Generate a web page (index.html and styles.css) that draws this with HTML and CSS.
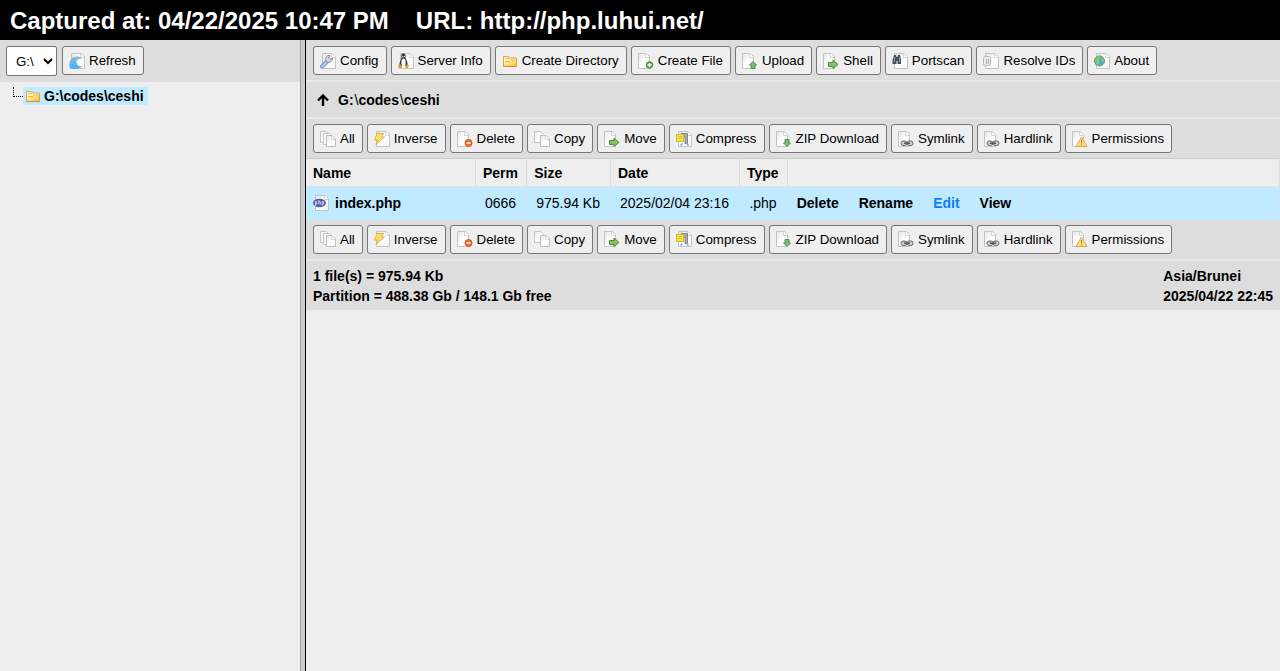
FILE: index.html
```html
<!DOCTYPE html>
<html lang="en">
<head>
<meta charset="utf-8">
<title>File Manager</title>
<link rel="stylesheet" href="styles.css">
</head>
<body>
<svg class="defs" aria-hidden="true">
  <defs>
    <linearGradient id="paper" x1="0" y1="0" x2="1" y2="1"><stop offset="0" stop-color="#e4e4e4"/><stop offset=".5" stop-color="#fff"/><stop offset="1" stop-color="#f4f4f4"/></linearGradient>
    <linearGradient id="gold" x1="0" y1="0" x2="1" y2="1"><stop offset="0" stop-color="#fff8cc"/><stop offset="1" stop-color="#f2c335"/></linearGradient>
    <linearGradient id="wave" x1="0" y1="0" x2="0" y2="1"><stop offset="0" stop-color="#8fbdd6"/><stop offset="1" stop-color="#3fb0ff"/></linearGradient>
  </defs>
  <symbol id="page" viewBox="0 0 16 16"><path d="M2.500.500h8l3 3v12h-11z" fill="url(#paper)" stroke="#c4c4c4"/><path d="M9.500.8v3.700h3.700" fill="#fff" stroke="#d4d4d4"/></symbol>
  <symbol id="pager" viewBox="0 0 16 16"><path d="M2.500.500h9.500l3.500 3.500v11.500h-13z" fill="url(#paper)" stroke="#c4c4c4"/><path d="M11.500 1v3.500h3.500" fill="#fff" stroke="#d8d8d8"/></symbol>
  <symbol id="refresh" viewBox="0 0 16 16"><use href="#pager"/><path d="M1 15.500C-1 9 2 3.500 8 3.500c3 0 4.500 1 5 2.500-3-1-6 1-5.500 4 .5 2.500 3 4 6 3-2 3-8 3.500-12.500 2.500z" fill="url(#wave)"/></symbol>
  <symbol id="folder" viewBox="0 0 16 16"><path d="M1.500 13.500v-10h5l1 1.500h7v8.500z" fill="#fff3bb" stroke="#dfa04c"/><path d="M2 13l1-4h5l1-2h5v6z" fill="url(#gold)"/><path d="M3 5.500h4m1 1.500h5.500M3 8.500h5" stroke="#eab84a" fill="none"/><path d="M1.500 13.500h13" stroke="#db8b42"/></symbol>
  <symbol id="config" viewBox="0 0 16 16"><use href="#pager"/><path d="M2 13.500l5-5" stroke="#668ed0" stroke-width="4" stroke-linecap="round"/><path d="M2.200 13.300l5-5" stroke="#a9c8fa" stroke-width="2.400" stroke-linecap="round"/><path d="M6.500 8.500c-2-3 0-6.500 3.500-6L8.500 5 10 6.500 12.500 5c0 4-3 5-6 3.500z" fill="#ddd" stroke="#888"/></symbol>
  <symbol id="server" viewBox="0 0 16 16"><use href="#pager"/><path d="M5.500.500C3.500.500 3 2 3.500 4.500 3 7 1 9 1.500 13h8c.5-4-1.500-6-2-8 .3-3 0-4.500-2-4.500z" fill="#333"/><ellipse cx="5.500" cy="9.800" rx="2.200" ry="4" fill="#fff"/><circle cx="4.800" cy="3.300" r=".6" fill="#fff"/><circle cx="6.400" cy="3.300" r=".6" fill="#fff"/><path d="M4 4.500h3l-1.500 1.200zM0 12.500l2-1.500 2.500 3.500-3.500 1zM11 12.500L9 11l-2 3.500 2.500 1z" fill="#d69d24"/></symbol>
  <symbol id="newfile" viewBox="0 0 16 16"><use href="#page" x="-2"/><circle cx="11.500" cy="12" r="3.300" fill="#5da33d" stroke="#4c8f32"/><path d="M9.500 12h4m-2-2v4" stroke="#fff" stroke-width="1.500"/></symbol>
  <symbol id="upload" viewBox="0 0 16 16"><use href="#page" x="-2"/><path d="M11 8.500l3.500 3.500H13v3.500H9V12H7.500z" fill="#7abd6c" stroke="#4a9555"/></symbol>
  <symbol id="download" viewBox="0 0 16 16"><use href="#page" x="-2"/><path d="M11 15.500L7.500 12H9V8.500h4V12h1.500z" fill="#7abd6c" stroke="#4a9555"/></symbol>
  <symbol id="arrow" viewBox="0 0 16 16"><use href="#page" x="-2"/><path d="M5.500 9.500H10V7l5 4.500-5 4V13.500H5.500z" fill="#83c45d" stroke="#4a8f35"/></symbol>
  <symbol id="portscan" viewBox="0 0 16 16"><use href="#pager"/><path d="M1.500 4l.5-2h2l.5 2h1L6 2h2l.5 2 .5 3v4H5.500V8h-1v3H.5V7z" fill="#46525f"/><path d="M2.500 4v5m5-5v5" stroke="#8c9aaa"/></symbol>
  <symbol id="resolve" viewBox="0 0 16 16"><use href="#pager"/><rect x=".5" y="3.500" width="7" height="9" rx="2" fill="#eee" stroke="#b4b4b4"/><path d="M3.500 6v5m2-5v5" stroke="#aaa"/></symbol>
  <symbol id="about" viewBox="0 0 16 16"><use href="#pager"/><circle cx="5.500" cy="8" r="5" fill="#4aa4dc" stroke="#6b9a61"/><path d="M1 7l3-4 3 1-2 3 1 2-2 3-2-1zM8 4l2 3-1 3-2-3z" fill="#85cc70"/></symbol>
  <symbol id="copies" viewBox="0 0 16 16"><path d="M.500.500h6l2 2v9h-8z" fill="#f7f7f7" stroke="#c6c6c6"/><path d="M3.500 2.500h6l2 2v9h-8z" fill="#f8f8f8" stroke="#c6c6c6"/><path d="M6.500 4.500h5.500l3.500 3.500v7.500h-9z" fill="url(#paper)" stroke="#c0c0c0"/><path d="M11.500 5v3.500H15" fill="#fff" stroke="#d4d4d4"/></symbol>
  <symbol id="copy" viewBox="0 0 16 16"><path d="M.500.500h6l3 3v8h-9z" fill="url(#paper)" stroke="#c6c6c6"/><path d="M6.500 4.500h5.500l3.500 3.500v7.500h-9z" fill="url(#paper)" stroke="#c0c0c0"/><path d="M11.500 5v3.500H15" fill="#fff" stroke="#d4d4d4"/></symbol>
  <symbol id="inverse" viewBox="0 0 16 16"><use href="#pager"/><path d="M3 2.500h6.500L7 6h3.500L2 13.500 4 9H.500z" fill="#ffdf6c" stroke="#e4b24a"/></symbol>
  <symbol id="delete" viewBox="0 0 16 16"><use href="#page" x="-2"/><circle cx="11.500" cy="12" r="3.500" fill="#ee7030" stroke="#d0561c"/><path d="M9.500 12h4" stroke="#fff" stroke-width="1.500"/></symbol>
  <symbol id="compress" viewBox="0 0 16 16"><use href="#pager"/><path d="M5 2.500h6.500v10H9V6H5z" fill="#aaa" stroke="#888"/><rect x=".5" y="3.500" width="7" height="7" fill="#f8e640" stroke="#cdb93a"/><path d="M2 5.500h4M2 7.500h4" stroke="#d8c335"/><path d="M4.500 14.500l2-2m4 0l2 2" stroke="#70a5e8" stroke-width="1.500"/></symbol>
  <symbol id="link" viewBox="0 0 16 16"><use href="#page" x="-2"/><rect x="3" y="10" width="6" height="4.500" rx="2.200" fill="#ccc" stroke="#666"/><rect x="9" y="10" width="6" height="4.500" rx="2.200" fill="#ccc" stroke="#666"/><path d="M6 12.200h6" stroke="#555" stroke-width="1.500"/></symbol>
  <symbol id="perms" viewBox="0 0 16 16"><use href="#page" x="-2"/><path d="M9.500 6l5.500 9.500H4z" fill="#ffdf78" stroke="#dda850"/><path d="M9.500 9v3.500m0 1v1" stroke="#9d7730"/></symbol>
  <symbol id="php" viewBox="0 0 16 16"><use href="#pager"/><ellipse cx="6.500" cy="8" rx="6.500" ry="4.200" fill="#5659a6"/><path d="M2.500 11V6.500h1.300v2.500H2.500M5.800 5v4.500m0-2.700h1.500v2.700M9.200 11V6.500h1.300v2.500H9.200" fill="none" stroke="#e4e5f5" stroke-width=".8"/></symbol>
</svg>

<header class="capture"><span>Captured at: 04/22/2025 10:47 PM</span><span>URL: http://php.luhui.net/</span></header>

<div class="layout">
  <aside class="side">
    <div class="side-bar">
      <select class="drive" aria-label="Drive"><option>G:\</option></select>
      <button class="btn"><svg class="icon"><use href="#refresh"/></svg>Refresh</button>
    </div>
    <nav class="tree">
      <span class="branch"></span>
      <a class="node" href="#"><svg class="icon"><use href="#folder"/></svg>G:\codes\ceshi</a>
    </nav>
  </aside>
  <div class="splitter"></div>
  <main class="main">
    <div class="bar">
      <button class="btn"><svg class="icon"><use href="#config"/></svg>Config</button>
      <button class="btn"><svg class="icon"><use href="#server"/></svg>Server Info</button>
      <button class="btn"><svg class="icon"><use href="#folder"/></svg>Create Directory</button>
      <button class="btn"><svg class="icon"><use href="#newfile"/></svg>Create File</button>
      <button class="btn"><svg class="icon"><use href="#upload"/></svg>Upload</button>
      <button class="btn"><svg class="icon"><use href="#arrow"/></svg>Shell</button>
      <button class="btn"><svg class="icon"><use href="#portscan"/></svg>Portscan</button>
      <button class="btn"><svg class="icon"><use href="#resolve"/></svg>Resolve IDs</button>
      <button class="btn"><svg class="icon"><use href="#about"/></svg>About</button>
    </div>
    <div class="path">
      <a class="up" href="#" aria-label="Up"><svg viewBox="0 0 12 12"><path d="M6 12V2M1 6.500L6 1.500l5 5" fill="none" stroke="#000" stroke-width="2.400"/></svg></a>
      <span><a href="#">G:</a><i>\</i><a href="#">codes</a><i>\</i><a href="#">ceshi</a></span>
    </div>
    <div class="bar">
      <button class="btn"><svg class="icon"><use href="#copies"/></svg>All</button>
      <button class="btn"><svg class="icon"><use href="#inverse"/></svg>Inverse</button>
      <button class="btn"><svg class="icon"><use href="#delete"/></svg>Delete</button>
      <button class="btn"><svg class="icon"><use href="#copy"/></svg>Copy</button>
      <button class="btn"><svg class="icon"><use href="#arrow"/></svg>Move</button>
      <button class="btn"><svg class="icon"><use href="#compress"/></svg>Compress</button>
      <button class="btn"><svg class="icon"><use href="#download"/></svg>ZIP Download</button>
      <button class="btn"><svg class="icon"><use href="#link"/></svg>Symlink</button>
      <button class="btn"><svg class="icon"><use href="#link"/></svg>Hardlink</button>
      <button class="btn"><svg class="icon"><use href="#perms"/></svg>Permissions</button>
    </div>
    <table class="files">
      <thead>
        <tr><th class="name">Name</th><th>Perm</th><th>Size</th><th>Date</th><th>Type</th><th colspan="7"></th></tr>
      </thead>
      <tbody>
        <tr>
          <td class="name"><a class="file" href="#"><svg class="icon"><use href="#php"/></svg>index.php</a></td>
          <td>0666</td><td>975.94 Kb</td><td>2025/02/04 23:16</td><td>.php</td>
          <td><a href="#">Delete</a></td><td><a href="#">Rename</a></td><td><a class="active" href="#">Edit</a></td><td><a href="#">View</a></td>
          <td class="blank"></td><td class="blank"></td><td class="rest"></td>
        </tr>
      </tbody>
    </table>
    <div class="bar">
      <button class="btn"><svg class="icon"><use href="#copies"/></svg>All</button>
      <button class="btn"><svg class="icon"><use href="#inverse"/></svg>Inverse</button>
      <button class="btn"><svg class="icon"><use href="#delete"/></svg>Delete</button>
      <button class="btn"><svg class="icon"><use href="#copy"/></svg>Copy</button>
      <button class="btn"><svg class="icon"><use href="#arrow"/></svg>Move</button>
      <button class="btn"><svg class="icon"><use href="#compress"/></svg>Compress</button>
      <button class="btn"><svg class="icon"><use href="#download"/></svg>ZIP Download</button>
      <button class="btn"><svg class="icon"><use href="#link"/></svg>Symlink</button>
      <button class="btn"><svg class="icon"><use href="#link"/></svg>Hardlink</button>
      <button class="btn"><svg class="icon"><use href="#perms"/></svg>Permissions</button>
    </div>
    <footer class="status">
      <div>1 file(s) = 975.94 Kb<br>Partition = 488.38 Gb / 148.1 Gb free</div>
      <div>Asia/Brunei<br>2025/04/22 22:45</div>
    </footer>
  </main>
</div>
</body>
</html>
```
FILE: styles.css
```css
* { box-sizing: border-box; }

body {
  display: flex;
  flex-direction: column;
  min-height: 100vh;
  margin: 0;
  background: #eee;
  color: #000;
  font-family: "Liberation Sans", Arial, sans-serif;
  font-size: 14px;
}

a { color: inherit; font-weight: bold; text-decoration: none; }

.defs { position: absolute; width: 0; height: 0; }
.icon { width: 16px; height: 16px; flex: none; }

.capture {
  display: flex;
  gap: 27px;
  padding: 2px 10px 0;
  background: #000;
  color: #fff;
  font-size: 24px;
  font-weight: bold;
  line-height: 38px;
}

.layout { display: flex; flex: 1; }
.side { flex: 0 0 300px; }
.main { flex: 1; min-width: 0; }

.splitter {
  flex: 0 0 6px;
  background: #ccc;
  border-left: 1px solid #a0a0a0;
  border-right: 1px solid #000;
}

.side-bar {
  display: flex;
  gap: 5px;
  padding: 6px;
  background: #ddd;
}

.drive {
  width: 51px;
  height: 30px;
  padding: 0 0 0 5px;
  background: #fff;
  border: 1px solid #767676;
  border-radius: 2px;
  color: #000;
  font-family: inherit;
}

.btn {
  display: flex;
  align-items: center;
  gap: 4px;
  height: 29px;
  padding: 0 7px 0 6px;
  background: #efefef;
  border: 1px solid #767676;
  border-radius: 3px;
  color: #000;
  font-family: inherit;
  white-space: nowrap;
}

.tree { display: flex; padding: 5px 13px; }
.branch {
  width: 10px;
  height: 10px;
  border-left: 1px dotted #000;
  border-bottom: 1px dotted #000;
}
.node {
  display: flex;
  align-items: center;
  gap: 3px;
  height: 18px;
  padding: 0 4px 0 2px;
  background: #bfeaff;
  border-radius: 2px;
}

.bar {
  display: flex;
  gap: 4px;
  padding: 5px 7px;
  background: #ddd;
}
.bar:first-child { padding-top: 6px; }

.path {
  display: flex;
  align-items: center;
  gap: 9px;
  height: 39px;
  padding: 0 11px;
  background: #ddd;
  border-top: 2px solid #e9e9e9;
  border-bottom: 2px solid #e9e9e9;
}
.path i { margin-left: 1px; font-style: normal; }
.up svg { display: block; width: 12px; height: 12px; }

.files { width: 100%; border-collapse: collapse; }
.files th {
  height: 28px;
  padding: 0 8px 0 7px;
  border-top: 1px solid #ccc;
  border-right: 1px solid #ddd;
  border-bottom: 1px solid #ddd;
  text-align: left;
}
.files td {
  height: 33px;
  padding: 0 10px 0 9px;
  background: #bfeaff;
  border-right: 1px solid #cfe4ee;
  text-align: right;
  white-space: nowrap;
}
.files .name { padding: 0 7px; text-align: left; }
.files .blank { padding: 0 15px 0 14px; }
.files .rest { width: 99%; }
.file { display: flex; align-items: center; gap: 6px; min-width: 155px; }
.active { color: #0f7bff; }

.status {
  display: flex;
  justify-content: space-between;
  padding: 5px 7px 4px;
  background: #ddd;
  border-top: 2px solid #e9e9e9;
  font-weight: bold;
  line-height: 20px;
}
```
